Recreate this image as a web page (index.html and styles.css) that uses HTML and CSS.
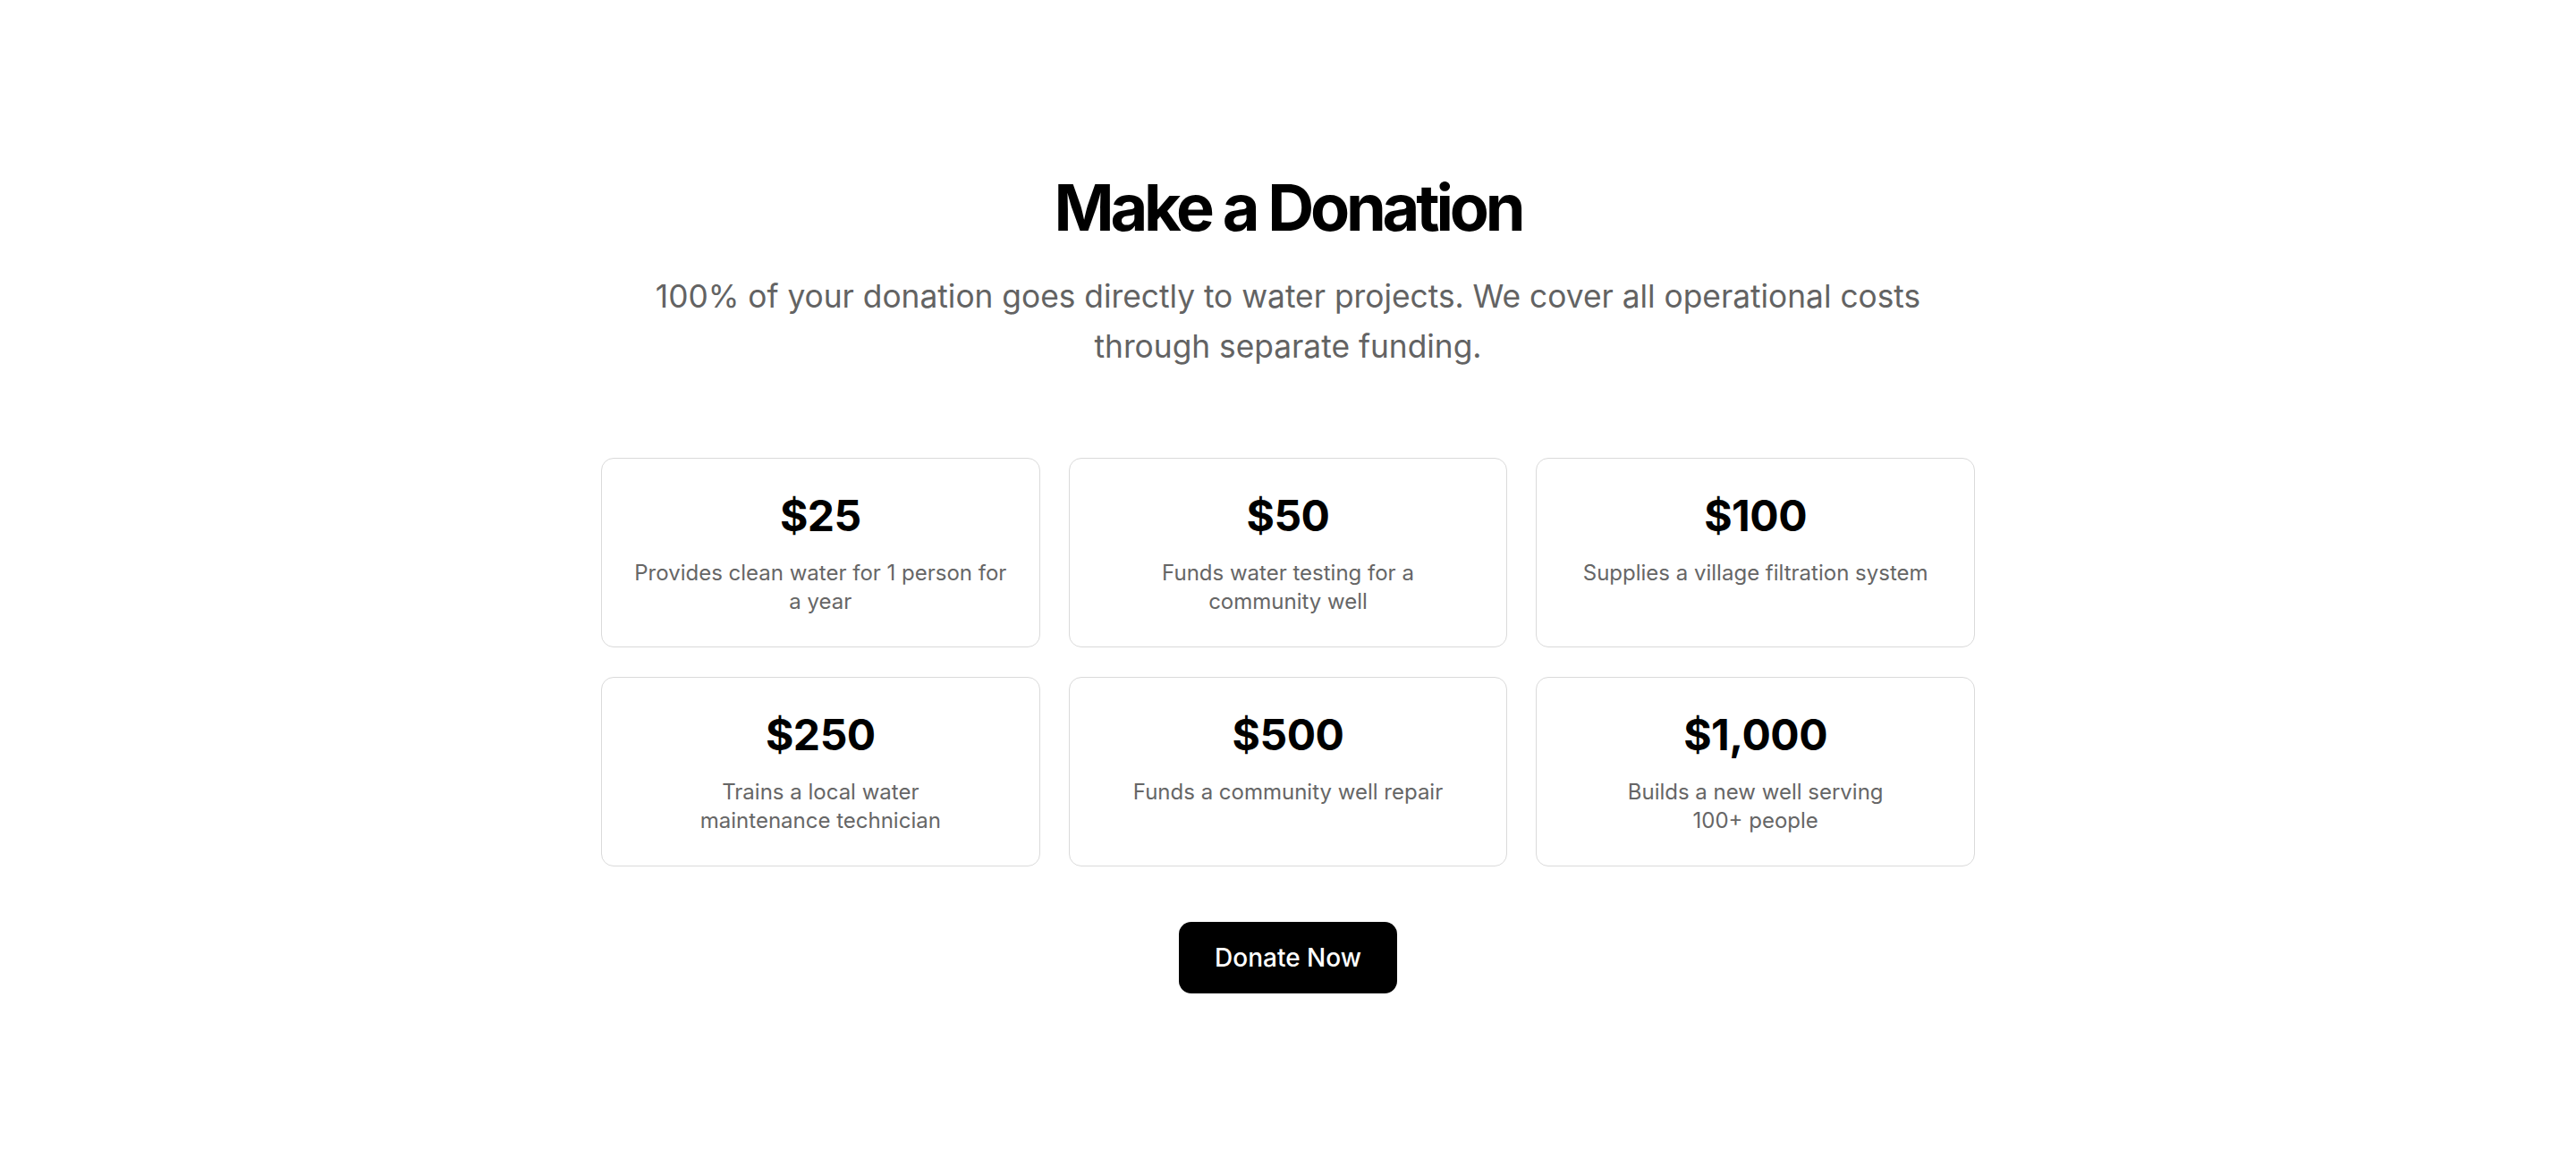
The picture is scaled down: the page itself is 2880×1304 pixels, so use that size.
FILE: index.html
```html
<!DOCTYPE html>
<html lang="en">
<head>
<meta charset="utf-8">
<title>Make a Donation</title>
<link rel="stylesheet" href="styles.css">
</head>
<body>
<section class="donate">
  <h1 class="title">Make a Donation</h1>
  <p class="subtitle">100% of your donation goes directly to water projects. We cover all operational costs through separate funding.</p>
  <div class="grid">
    <div class="card">
      <div class="amount">$25</div>
      <p class="desc">Provides clean water for 1 person for a year</p>
    </div>
    <div class="card">
      <div class="amount">$50</div>
      <p class="desc">Funds water testing for a community well</p>
    </div>
    <div class="card">
      <div class="amount">$100</div>
      <p class="desc">Supplies a village filtration system</p>
    </div>
    <div class="card">
      <div class="amount">$250</div>
      <p class="desc">Trains a local water maintenance technician</p>
    </div>
    <div class="card">
      <div class="amount">$500</div>
      <p class="desc">Funds a community well repair</p>
    </div>
    <div class="card">
      <div class="amount">$1,000</div>
      <p class="desc">Builds a new well serving 100+ people</p>
    </div>
  </div>
  <button class="btn" type="button">Donate Now</button>
</section>
</body>
</html>
```

FILE: styles.css
```css
* {
  box-sizing: border-box;
}

html, body {
  margin: 0;
  padding: 0;
  background: #ffffff;
}

body {
  font-family: Inter, "Noto Sans", "Liberation Sans", sans-serif;
  color: #000000;
}

.donate {
  display: flex;
  flex-direction: column;
  align-items: center;
  padding-top: 192px;
  padding-bottom: 190px;
}

.title {
  margin: 0;
  font-size: 72px;
  line-height: 80px;
  font-weight: 700;
  letter-spacing: -0.058em;
  text-align: center;
}

.subtitle {
  margin: 32px 0 0;
  max-width: 1460px;
  font-size: 35.3px;
  line-height: 56px;
  color: #636363;
  text-align: center;
}

.grid {
  margin-top: 96px;
  width: 1536px;
  display: grid;
  grid-template-columns: repeat(3, 1fr);
  gap: 33px 32px;
}

.card {
  border: 1px solid #dadada;
  border-radius: 14px;
  padding: 37px 32px 34px;
  text-align: center;
}

.amount {
  font-size: 48px;
  line-height: 54px;
  font-weight: 700;
  letter-spacing: -0.01em;
}

.desc {
  margin: 21px 0 0;
  font-size: 24px;
  line-height: 32px;
  color: #666666;
  text-wrap: pretty;
}

.btn {
  margin-top: 62px;
  padding: 20px 40px;
  border: none;
  border-radius: 14px;
  background: #000000;
  color: #ffffff;
  font-family: inherit;
  font-size: 28px;
  line-height: 40px;
  font-weight: 500;
  cursor: pointer;
}
```
